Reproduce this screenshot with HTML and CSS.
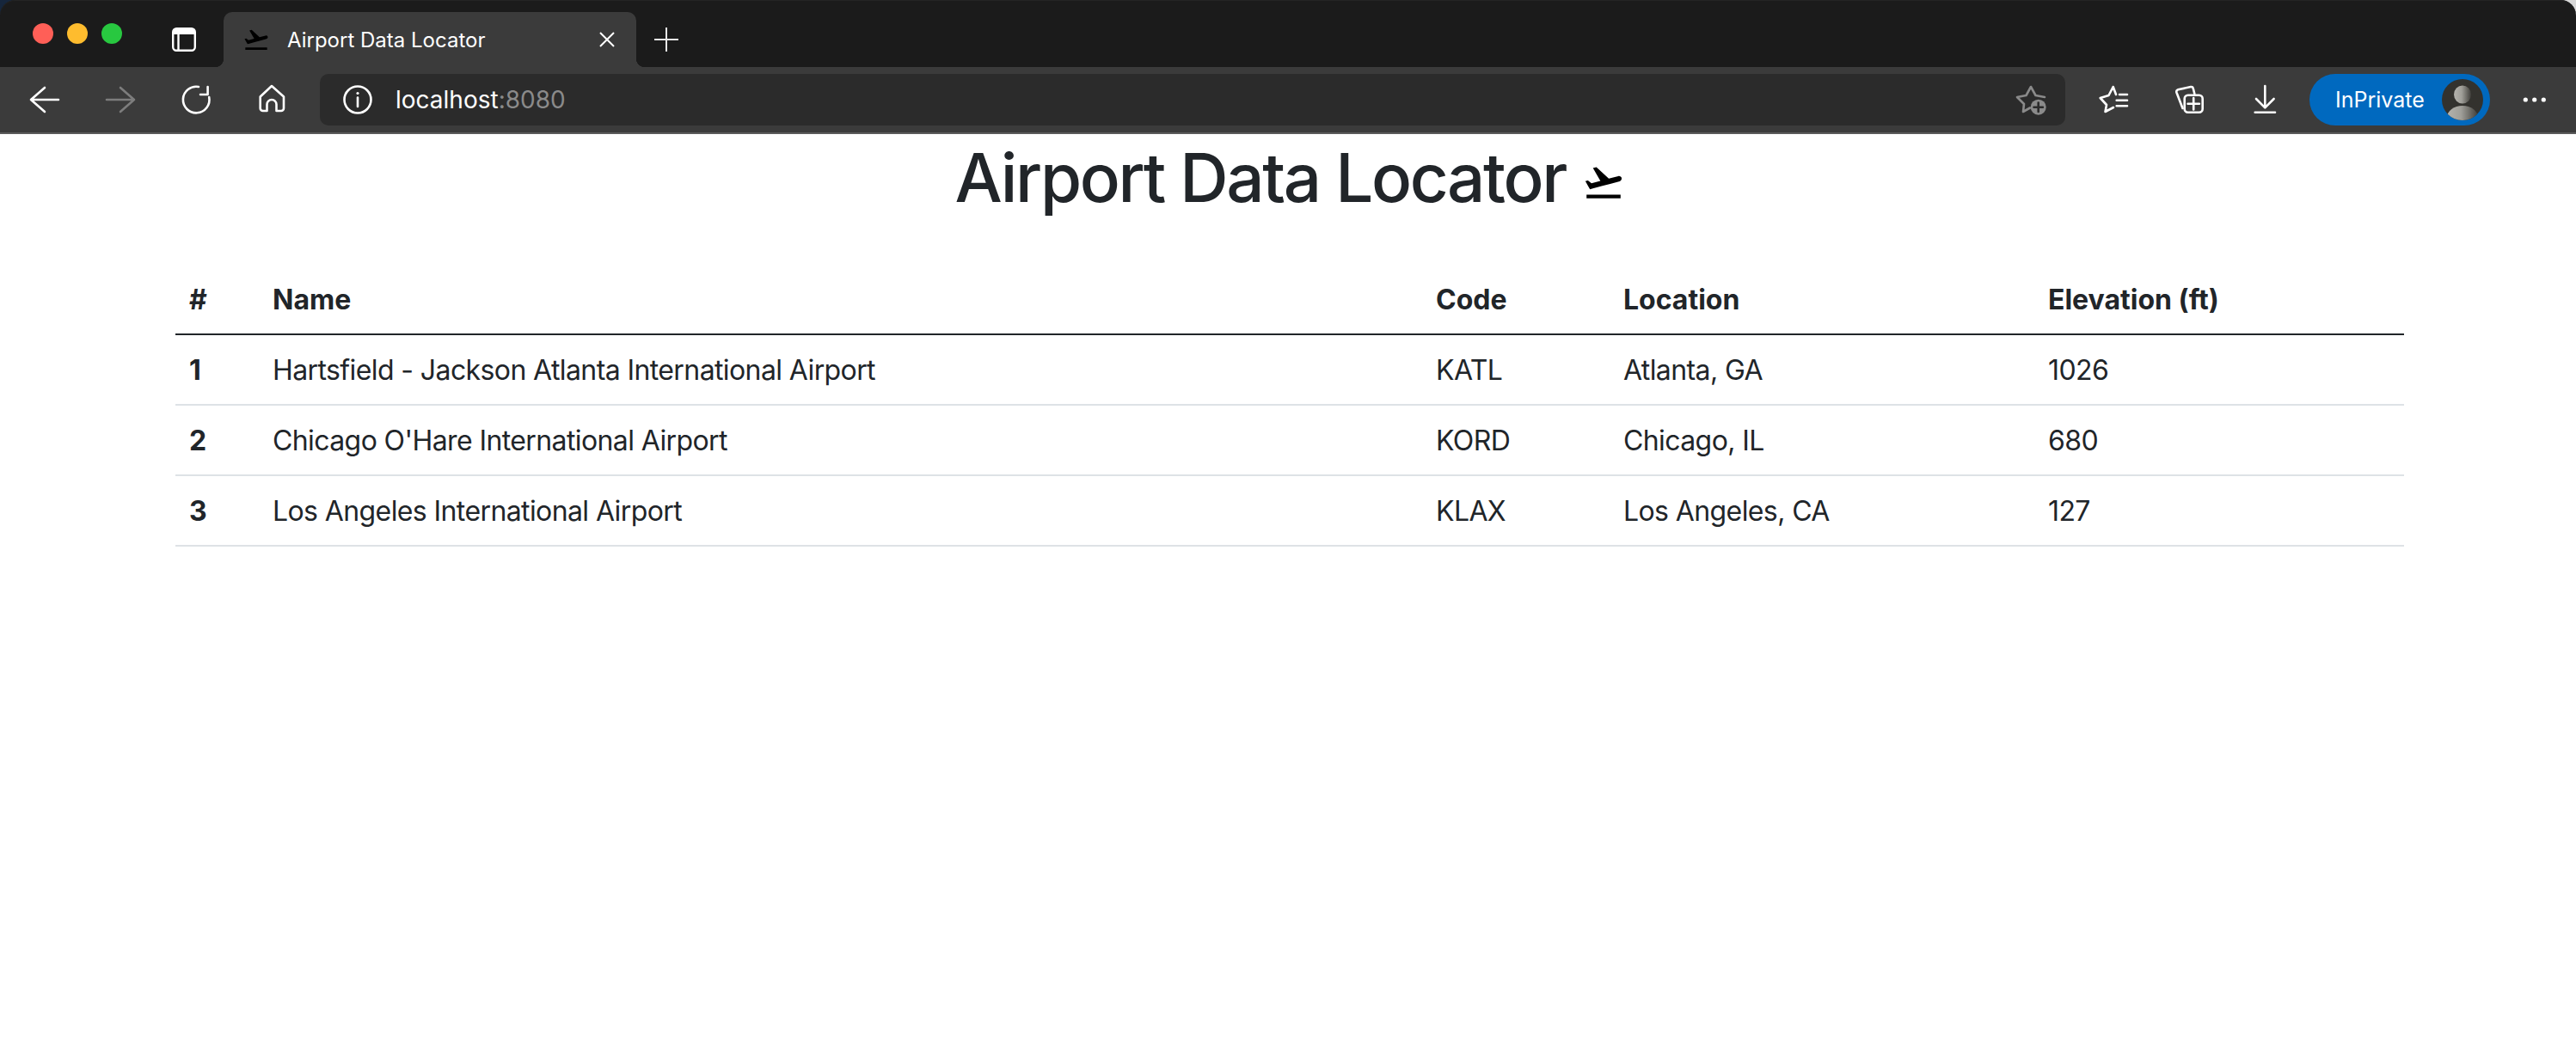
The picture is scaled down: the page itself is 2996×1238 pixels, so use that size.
FILE: index.html
```html
<!DOCTYPE html>
<html lang="en">

<head>
    <meta charset="UTF-8">
    <title>Airport Data Locator</title>
    <link rel="stylesheet" href="styles.css">
</head>

<body>
    <svg class="sprites" width="0" height="0">
        <symbol id="plane" viewBox="0 0 24 24">
            <path d="M2.5 19h19v2h-19zm19.57-9.36c-.21-.8-1.04-1.28-1.84-1.06L14.92 10l-6.9-6.43-1.93.51 4.14 7.17-4.97 1.33-1.97-1.54-1.45.39 1.82 3.16.77 1.33 1.6-.43 5.31-1.42 4.35-1.16L21 11.49c.81-.23 1.28-1.05 1.07-1.85z"/>
        </symbol>
    </svg>

    <header class="browser">
        <div class="tabbar">
            <div class="lights">
                <span class="light light--red"></span>
                <span class="light light--yellow"></span>
                <span class="light light--green"></span>
            </div>
            <svg class="tabs-icon" width="28" height="28" viewBox="0 0 28 28">
                <rect x="1.2" y="1.2" width="25.6" height="25.6" rx="4" fill="none" stroke="#fff" stroke-width="2.4"/>
                <path d="M1 6a5 5 0 0 1 5-5h16a5 5 0 0 1 5 5v2H1z" fill="#fff"/>
                <path d="M7.5 7v19" stroke="#fff" stroke-width="2.4"/>
            </svg>
            <div class="tab">
                <svg class="tab__plane"><use href="#plane"/></svg>
                <span class="tab__title">Airport Data Locator</span>
                <svg class="tab__close" width="18" height="18" viewBox="0 0 18 18">
                    <path d="M1 1l16 16M17 1L1 17" stroke="#fff" stroke-width="2"/>
                </svg>
            </div>
            <svg class="tab-add" width="28" height="28" viewBox="0 0 28 28">
                <path d="M14 0v28M0 14h28" stroke="#e8e8e8" stroke-width="2"/>
            </svg>
        </div>

        <div class="toolbar">
            <span class="tool">
                <svg width="40" height="40" viewBox="0 0 40 40"><path d="M20 6L4 20l16 14M4 20h32"/></svg>
            </span>
            <span class="tool tool--off">
                <svg width="40" height="40" viewBox="0 0 40 40"><path d="M20 6l16 14-16 14M36 20H4"/></svg>
            </span>
            <span class="tool">
                <svg width="40" height="40" viewBox="0 0 40 40"><path d="M23 5A15.3 15.3 0 1 0 35.2 17M33.6 5v9H25"/></svg>
            </span>
            <span class="tool">
                <svg width="40" height="40" viewBox="0 0 40 40"><path d="M20 4L34 16.500V30a3 3 0 0 1-3 3h-5.500V25.500a5.500 5.500 0 0 0-11 0V33H9.700a3 3 0 0 1-3-3V16.500z"/></svg>
            </span>

            <div class="address">
                <svg class="address__info" width="36" height="36" viewBox="0 0 36 36">
                    <circle cx="18" cy="18" r="15.500"/>
                    <path d="M18 15.500V26"/>
                    <circle class="dot" cx="18" cy="10.500" r="1.600"/>
                </svg>
                <span class="address__url">localhost<span class="address__port">:8080</span></span>
                <svg class="address__fav" width="44" height="40" viewBox="0 0 44 40">
                    <path d="M19 29.500L11 34l1-9-8-8 10.500-2L20 5l5.500 10L36 17"/>
                    <circle class="badge" cx="28.700" cy="28.700" r="9"/>
                    <path class="badge-plus" d="M28.700 23.500v10.400M23.500 28.700h10.400"/>
                </svg>
            </div>

            <div class="tools-right">
                <span class="tool">
                    <svg width="40" height="40" viewBox="0 0 40 40"><path d="M23 14L19.700 5l-5.200 10-9.800 3 7.300 8-1.500 8 9.500-5M27 14h9M23.700 20.700H36M23.700 27.300H36"/></svg>
                </span>
                <span class="tool">
                    <svg width="40" height="40" viewBox="0 0 40 40"><path d="M12.500 30L5.400 11.500a2.500 2.500 0 0 1 1.800-3.200L22 5a2.500 2.500 0 0 1 2.800 2l1.500 6"/><rect x="14.700" y="14.700" width="21" height="20" rx="4"/><path d="M25.200 18v13.400M18.500 24.700h13.400"/></svg>
                </span>
                <span class="tool">
                    <svg width="40" height="40" viewBox="0 0 40 40"><path d="M20.300 4v25M10 19l10.300 10.300L30.600 19M8.700 34.700H32"/></svg>
                </span>
            </div>

            <div class="profile">
                <span class="profile__name">InPrivate</span>
                <svg class="profile__pic" width="48" height="48" viewBox="0 0 48 48">
                    <defs>
                        <linearGradient id="shade">
                            <stop offset="0" stop-color="#b4b3ad"/>
                            <stop offset=".45" stop-color="#a09f99"/>
                            <stop offset="1" stop-color="#3f3e3a"/>
                        </linearGradient>
                        <clipPath id="round"><circle cx="24" cy="24" r="24"/></clipPath>
                    </defs>
                    <circle cx="24" cy="24" r="24" fill="#33322e"/>
                    <g clip-path="url(#round)" fill="url(#shade)">
                        <ellipse cx="24" cy="18" rx="10" ry="10.500"/>
                        <ellipse cx="24" cy="45" rx="18" ry="14"/>
                    </g>
                </svg>
            </div>
            <span class="more">
                <svg width="30" height="8" viewBox="0 0 30 8" fill="#fff">
                    <circle cx="4.300" cy="4" r="2.600"/>
                    <circle cx="14.700" cy="4" r="2.600"/>
                    <circle cx="25.300" cy="4" r="2.600"/>
                </svg>
            </span>
        </div>
    </header>

    <main class="page">
        <h1 class="title">Airport Data Locator <svg class="title__plane"><use href="#plane"/></svg></h1>

        <table class="airports">
            <colgroup>
                <col class="col-num">
                <col class="col-name">
                <col class="col-code">
                <col class="col-location">
                <col class="col-elevation">
            </colgroup>
            <thead>
                <tr>
                    <th>#</th>
                    <th>Name</th>
                    <th>Code</th>
                    <th>Location</th>
                    <th>Elevation (ft)</th>
                </tr>
            </thead>
            <tbody>
                <tr>
                    <th>1</th>
                    <td>Hartsfield - Jackson Atlanta International Airport</td>
                    <td>KATL</td>
                    <td>Atlanta, GA</td>
                    <td>1026</td>
                </tr>
                <tr>
                    <th>2</th>
                    <td>Chicago O'Hare International Airport</td>
                    <td>KORD</td>
                    <td>Chicago, IL</td>
                    <td>680</td>
                </tr>
                <tr>
                    <th>3</th>
                    <td>Los Angeles International Airport</td>
                    <td>KLAX</td>
                    <td>Los Angeles, CA</td>
                    <td>127</td>
                </tr>
            </tbody>
        </table>
    </main>
</body>
</html>
```

FILE: styles.css
```css
html,
body {
    margin: 0;
    background: white;
}

body {
    font-family: Inter, "Liberation Sans", sans-serif;
    color: #212529;
}

.sprites {
    display: block;
}

/* browser window */
.browser {
    background: linear-gradient(to right, #16263c 50%, #d8d8d8 50%);
}

.browser svg {
    display: block;
    flex: none;
}

.tabbar {
    display: flex;
    align-items: flex-end;
    height: 78px;
    border-radius: 18px 18px 0 0;
    box-shadow: inset 0 1px 0 #242424;
    background: #1b1b1b;
}

.lights {
    display: flex;
    align-self: flex-start;
    gap: 16px;
    width: 200px;
    padding: 27px 0 0 38px;
    box-sizing: border-box;
}

.light {
    width: 24px;
    height: 24px;
    border-radius: 50%;
}

.light--red {
    background: #ff5f57;
}

.light--yellow {
    background: #febc2e;
}

.light--green {
    background: #28c840;
}

.tabs-icon {
    align-self: flex-start;
    margin-top: 32px;
}

.tab {
    position: relative;
    display: flex;
    align-items: center;
    width: 480px;
    height: 64px;
    margin-left: 32px;
    padding: 0 25px 0 22px;
    box-sizing: border-box;
    border-radius: 10px 10px 0 0;
    background: #3b3b3b;
}

.tab::before,
.tab::after {
    content: "";
    position: absolute;
    bottom: 0;
    width: 10px;
    height: 10px;
}

.tab::before {
    left: -10px;
    background: radial-gradient(circle at 0 0, #1b1b1b 10px, #3b3b3b 10.5px);
}

.tab::after {
    right: -10px;
    background: radial-gradient(circle at 100% 0, #1b1b1b 10px, #3b3b3b 10.5px);
}

.tab__plane {
    width: 32px;
    height: 32px;
    fill: #000;
}

.tab__title {
    flex: 1;
    margin-left: 20px;
    font-size: 24px;
    color: white;
}

.tab-add {
    align-self: flex-start;
    margin: 32px 0 0 21px;
}

.toolbar {
    display: flex;
    align-items: center;
    height: 76px;
    padding-left: 8px;
    border-bottom: 2px solid #5a5a5a;
    background: #3b3b3b;
}

.tool {
    display: flex;
    justify-content: center;
    width: 88px;
}

.tool svg,
.address svg {
    fill: none;
    stroke: white;
    stroke-width: 2.6;
    stroke-linecap: round;
    stroke-linejoin: round;
}

.tool--off svg {
    stroke: #7d7d7d;
}

.address {
    display: flex;
    flex: none;
    align-items: center;
    width: 2030px;
    height: 60px;
    margin-left: 12px;
    padding: 0 16px 0 26px;
    box-sizing: border-box;
    border-radius: 10px;
    background: #2b2b2b;
}

.address__url {
    flex: 1;
    margin-left: 26px;
    font-size: 28px;
    color: white;
}

.address__port {
    color: #8a8a8a;
}

.address svg .dot {
    fill: white;
    stroke: none;
}

.address .address__fav {
    stroke: #8a8a8a;
}

.address__fav .badge {
    fill: #8a8a8a;
    stroke: none;
}

.address__fav .badge-plus {
    stroke: #2b2b2b;
}

.tools-right {
    display: flex;
    margin-left: 12px;
}

.profile {
    display: flex;
    flex: none;
    align-items: center;
    justify-content: space-between;
    width: 210px;
    height: 60px;
    margin-left: 8px;
    padding: 0 8px 0 30px;
    box-sizing: border-box;
    border-radius: 30px;
    background: #0069bf;
}

.profile__name {
    font-size: 25px;
    color: white;
}

.more {
    display: flex;
    justify-content: center;
    width: 88px;
    margin-left: 8px;
}

/* page */
.page {
    padding-left: 204px;
}

.title {
    margin: 0 200px 53px 0;
    padding-top: 3px;
    font-size: 78px;
    font-weight: 500;
    letter-spacing: -2.35px;
    line-height: 96px;
    text-align: center;
}

.title__plane {
    width: 50px;
    height: 50px;
    vertical-align: -2px;
    fill: #000;
}

.airports {
    width: 2592px;
    table-layout: fixed;
    border-collapse: collapse;
    font-size: 32px;
    line-height: 48px;
}

.col-num {
    width: 97px;
}

.col-name {
    width: 1353px;
}

.col-code {
    width: 218px;
}

.col-location {
    width: 494px;
}

.airports th,
.airports td {
    padding: 17px 16px 15px;
    border-bottom: 2px solid #dee2e6;
    font-weight: 400;
    letter-spacing: -0.6px;
    text-align: left;
}

.airports th {
    font-weight: 700;
    letter-spacing: 0;
}

.airports thead th {
    border-bottom: 2px solid #212529;
}
```
